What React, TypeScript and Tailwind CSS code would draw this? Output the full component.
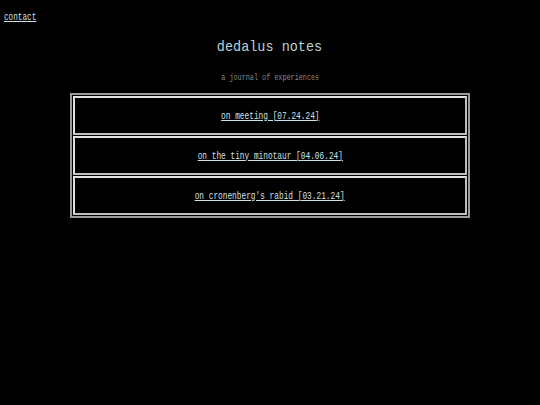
const posts = [
  "on meeting [07.24.24]",
  "on the tiny minotaur [04.06.24]",
  "on cronenberg's rabid [03.21.24]",
];

export default function App() {
  return (
    <div className="min-h-[405px] bg-black font-['Liberation_Mono',monospace] text-[#cfe0e8]">
      <div className="px-1 pt-[10px] text-[11px] leading-[14px]">
        <a href="#" className="inline-block origin-left scale-x-[0.7] underline">
          contact
        </a>
      </div>
      <h1 className="mt-[14px] text-center text-[15px] leading-[20px] text-[#b7d3da]">
        <span className="inline-block scale-x-[0.9]">dedalus notes</span>
      </h1>
      <p className="mt-[14px] text-center text-[8.5px] leading-[12px] text-[#8a8a8a]">
        <span className="inline-block scale-x-[0.8]">a journal of experiences</span>
      </p>
      <div className="mx-auto mt-[9px] flex w-[400px] flex-col gap-[1px] border-2 border-[#9a9a9a] p-[1px]">
        {posts.map((p) => (
          <div
            key={p}
            className="flex h-[39px] items-center justify-center border-2 border-t-[#e0e0e0] border-l-[#e0e0e0] border-r-[#bdbdbd] border-b-[#bdbdbd] text-[11px] leading-[14px]"
          >
            <a href="#" className="inline-block scale-x-[0.71] underline">
              {p}
            </a>
          </div>
        ))}
      </div>
    </div>
  );
}
